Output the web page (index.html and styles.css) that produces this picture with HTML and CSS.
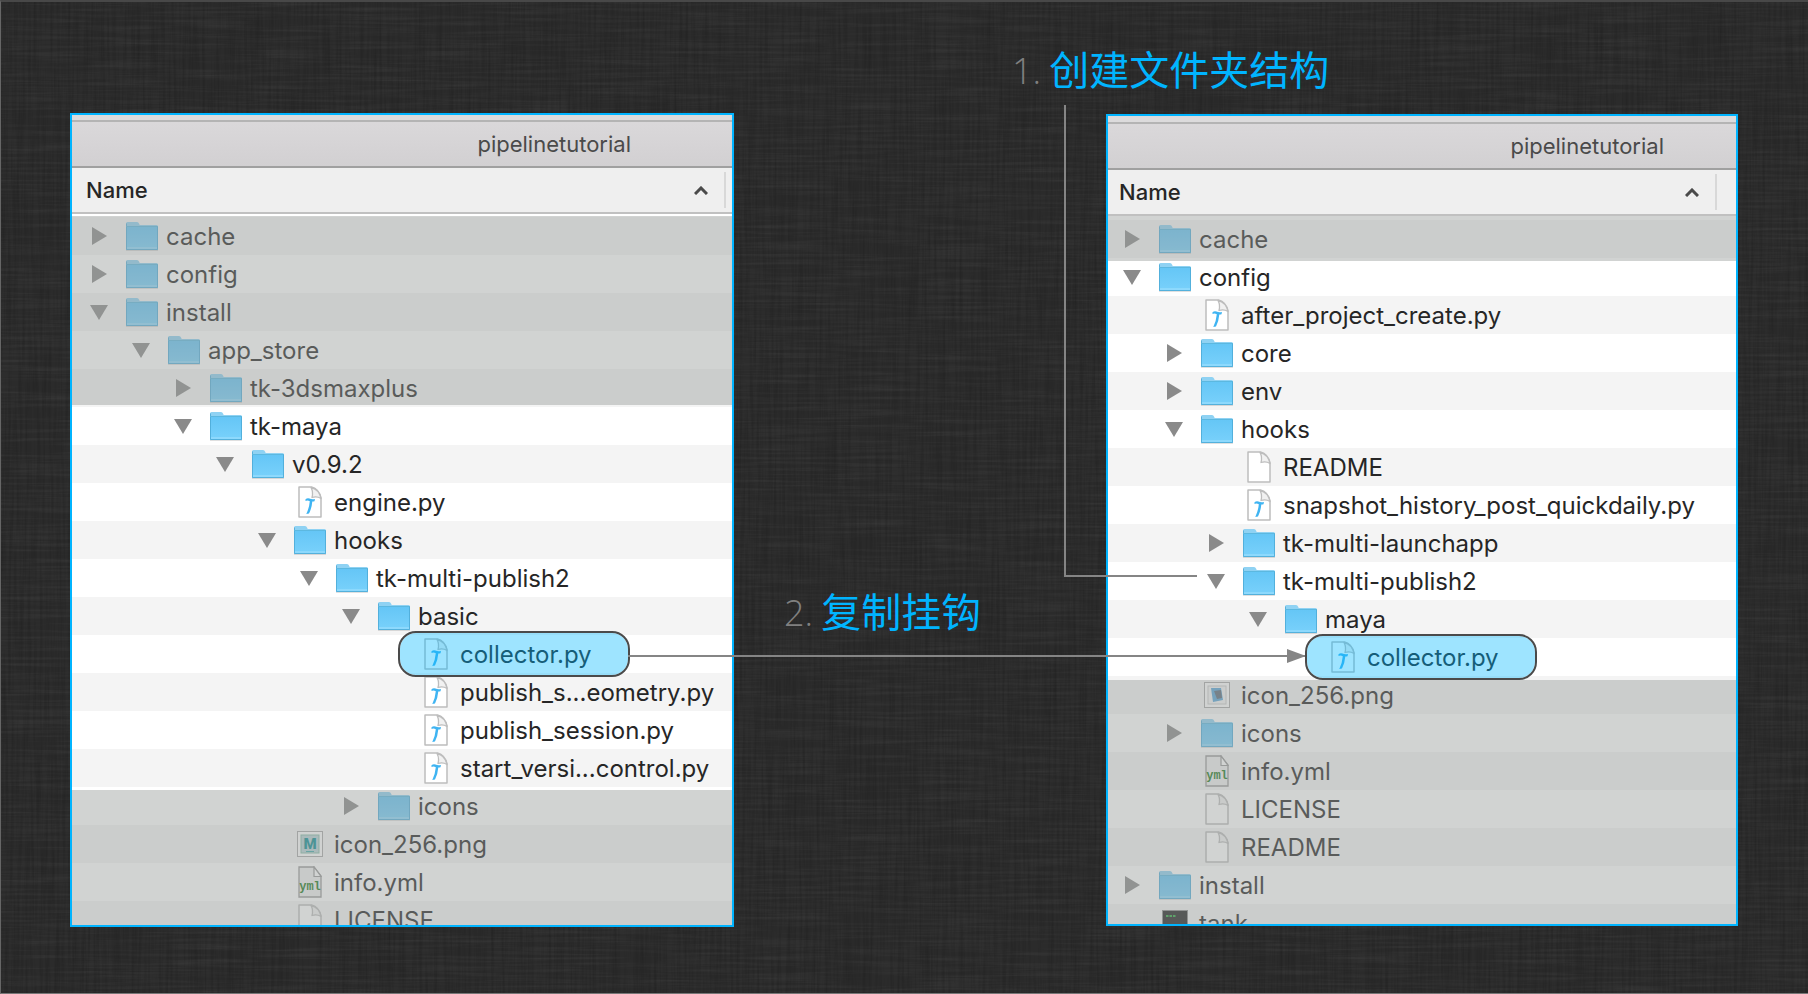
FILE: index.html
```html
<!DOCTYPE html>
<html lang="zh-CN">
<head>
<meta charset="utf-8">
<title>pipelinetutorial</title>
<meta name="viewport" content="width=device-width, initial-scale=1">
<link rel="stylesheet" href="styles.css">
</head>
<body>
<svg class="defs" aria-hidden="true">
  <defs>
    <linearGradient id="folder-fill" x1="0" y1="0" x2="0" y2="1">
      <stop offset="0" stop-color="#65c6f6"/><stop offset="1" stop-color="#79d1fb"/>
    </linearGradient>
    <symbol id="folder" viewBox="0 0 32 30">
      <path d="M0 29.500H32" stroke="#000" stroke-opacity=".12"/>
      <path d="M0 2.500Q0 1 1.500 1H11Q12.500 1 13 2.500L13.700 4H30.500Q32 4 32 5.500V28Q32 29 31 29H1Q0 29 0 28Z" fill="#8fd2f3"/>
      <path d="M0 6H32V28Q32 29 31 29H1Q0 29 0 28Z" fill="url(#folder-fill)"/>
      <path d="M.5 2.500V28.500H31.500V5" fill="none" stroke="#4ba9d4" stroke-opacity=".8"/>
      <path d="M0 5.500H32" stroke="#5cb8e0"/>
      <path d="M1 27H31" stroke="#a3e2ff"/>
    </symbol>
    <symbol id="sheet" viewBox="0 0 24 32">
      <path d="M1 1H13.500Q21 3 23 12V31H1Z" fill="#fff" stroke="#bdbdbd" stroke-width="1.500" stroke-linejoin="round"/>
      <path d="M13 1.500Q15.500 6 14 11.500Q19 10 23 12.500Q21 3 13 1.500Z" fill="#f1f1f1" stroke="#bdbdbd" stroke-width="1.300" stroke-linejoin="round"/>
    </symbol>
    <symbol id="python" viewBox="0 0 24 32">
      <use href="#sheet"/>
      <path d="M7.500 13.200Q9.500 11.800 11.500 12.600Q14 13.800 17 13L16.500 15.300Q14.800 15.800 14.300 15.500Q13.800 22 11 27.500L8.300 28Q11.300 21.500 11.800 15.200Q9.500 14 7.500 15Z" fill="#3fb4f2"/>
    </symbol>
    <symbol id="yaml" viewBox="0 0 24 32">
      <path d="M1 1H16L23 10V31H1Z" fill="#eee" stroke="#999" stroke-width="1.300"/>
      <path d="M16 1V10.500H23Z" fill="#fff" stroke="#999" stroke-width="1.200"/>
      <text x="12" y="24" text-anchor="middle" font-family="Liberation Mono, monospace" font-weight="700" font-size="12" fill="#1d7a1d">yml</text>
    </symbol>
    <symbol id="maya" viewBox="0 0 26 26">
      <rect x=".5" y=".5" width="25" height="25" fill="#fdfdfd" stroke="#aaa"/>
      <rect x="4" y="4" width="18" height="18" fill="#b9d2d6" stroke="#8ba"/>
      <text x="13" y="18" text-anchor="middle" font-family="Roboto, sans-serif" font-weight="900" font-size="15" fill="#0e8d92">M</text>
      <path d="M9 20.500H17" stroke="#42a9ab"/>
    </symbol>
    <symbol id="picture" viewBox="0 0 26 26">
      <rect x=".5" y=".5" width="25" height="25" fill="#fdfdfd" stroke="#aaa"/>
      <rect x="4" y="4" width="18" height="18" fill="#f4f4f4" stroke="#ccc"/>
      <path d="M7 6H17L19 18L9 20Z" fill="#5aa6d8"/>
      <path d="M10 9L17 8L18 16L13 17Z" fill="#5d6c7b"/>
    </symbol>
    <symbol id="terminal" viewBox="0 0 26 26">
      <rect x=".5" y=".5" width="25" height="25" fill="#222" stroke="#8a8a8a"/>
      <path d="M4 6H14" stroke="#36d24d" stroke-width="1.500" stroke-dasharray="2.500 1"/>
    </symbol>
    <symbol id="tri-right" viewBox="0 0 18 18"><path d="M2 0V18L17 9Z" fill="#8a8a8a"/></symbol>
    <symbol id="tri-down" viewBox="0 0 18 18"><path d="M0 2H18L9 17Z" fill="#8a8a8a"/></symbol>
    <filter id="weave-h" x="0" y="0" width="100%" height="100%">
      <feTurbulence type="fractalNoise" baseFrequency="0.012 0.35" numOctaves="3" seed="4"/>
      <feColorMatrix values="0 0 0 0 1  0 0 0 0 1  0 0 0 0 1  1.600 0 0 0 -0.620"/>
    </filter>
    <filter id="weave-v" x="0" y="0" width="100%" height="100%">
      <feTurbulence type="fractalNoise" baseFrequency="0.350 0.012" numOctaves="3" seed="9"/>
      <feColorMatrix values="0 0 0 0 0  0 0 0 0 0  0 0 0 0 0  1.600 0 0 0 -0.620"/>
    </filter>
  </defs>
</svg>

<main class="stage">
  <svg class="weave" aria-hidden="true">
    <rect class="weave-light" width="100%" height="100%" filter="url(#weave-h)"/>
    <rect class="weave-dark" width="100%" height="100%" filter="url(#weave-v)"/>
  </svg>

  <h2 class="step step-one"><span class="num">1.</span>创建文件夹结构</h2>

  <section class="window source" aria-label="pipelinetutorial">
    <div class="strip"></div>
    <header class="titlebar">pipelinetutorial</header>
    <div class="columns">
      <button class="sort" type="button">Name<svg class="chevron" viewBox="0 0 14 9" aria-hidden="true"><path d="M1 8L7 2L13 8"/></svg></button>
    </div>
    <ul class="tree">
      <li class="row l0"><button class="tri" type="button" aria-label="cache"><svg><use href="#tri-right"/></svg></button><svg class="icon folder"><use href="#folder"/></svg><span>cache</span></li>
      <li class="row l0"><button class="tri" type="button" aria-label="config"><svg><use href="#tri-right"/></svg></button><svg class="icon folder"><use href="#folder"/></svg><span>config</span></li>
      <li class="row l0"><button class="tri" type="button" aria-label="install"><svg><use href="#tri-down"/></svg></button><svg class="icon folder"><use href="#folder"/></svg><span>install</span></li>
      <li class="row l1"><button class="tri" type="button" aria-label="app_store"><svg><use href="#tri-down"/></svg></button><svg class="icon folder"><use href="#folder"/></svg><span>app_store</span></li>
      <li class="row l2"><button class="tri" type="button" aria-label="tk-3dsmaxplus"><svg><use href="#tri-right"/></svg></button><svg class="icon folder"><use href="#folder"/></svg><span>tk-3dsmaxplus</span></li>
      <li class="row l2"><button class="tri" type="button" aria-label="tk-maya"><svg><use href="#tri-down"/></svg></button><svg class="icon folder"><use href="#folder"/></svg><span>tk-maya</span></li>
      <li class="row l3"><button class="tri" type="button" aria-label="v0.9.2"><svg><use href="#tri-down"/></svg></button><svg class="icon folder"><use href="#folder"/></svg><span>v0.9.2</span></li>
      <li class="row l4 leaf"><svg class="icon"><use href="#python"/></svg><span>engine.py</span></li>
      <li class="row l4"><button class="tri" type="button" aria-label="hooks"><svg><use href="#tri-down"/></svg></button><svg class="icon folder"><use href="#folder"/></svg><span>hooks</span></li>
      <li class="row l5"><button class="tri" type="button" aria-label="tk-multi-publish2"><svg><use href="#tri-down"/></svg></button><svg class="icon folder"><use href="#folder"/></svg><span>tk-multi-publish2</span></li>
      <li class="row l6"><button class="tri" type="button" aria-label="basic"><svg><use href="#tri-down"/></svg></button><svg class="icon folder"><use href="#folder"/></svg><span>basic</span></li>
      <li class="row l7 leaf marked"><svg class="icon"><use href="#python"/></svg><span>collector.py</span></li>
      <li class="row l7 leaf"><svg class="icon"><use href="#python"/></svg><span>publish_s...eometry.py</span></li>
      <li class="row l7 leaf"><svg class="icon"><use href="#python"/></svg><span>publish_session.py</span></li>
      <li class="row l7 leaf"><svg class="icon"><use href="#python"/></svg><span>start_versi...control.py</span></li>
      <li class="row l6"><button class="tri" type="button" aria-label="icons"><svg><use href="#tri-right"/></svg></button><svg class="icon folder"><use href="#folder"/></svg><span>icons</span></li>
      <li class="row l4 leaf"><svg class="icon thumb"><use href="#maya"/></svg><span>icon_256.png</span></li>
      <li class="row l4 leaf"><svg class="icon"><use href="#yaml"/></svg><span>info.yml</span></li>
      <li class="row l4 leaf"><svg class="icon"><use href="#sheet"/></svg><span>LICENSE</span></li>
      <li class="shade shade-top" role="presentation"></li>
      <li class="shade shade-bottom" role="presentation"></li>
    </ul>
  </section>

  <div class="between">
    <h2 class="step step-two"><span class="num">2.</span>复制挂钩</h2>
    <div class="elbow"></div>
    <div class="arrow"><svg viewBox="0 0 19 14" aria-hidden="true"><path d="M0 0L19 7L0 14Z"/></svg></div>
  </div>

  <section class="window target" aria-label="pipelinetutorial">
    <div class="strip"></div>
    <header class="titlebar">pipelinetutorial</header>
    <div class="columns">
      <button class="sort" type="button">Name<svg class="chevron" viewBox="0 0 14 9" aria-hidden="true"><path d="M1 8L7 2L13 8"/></svg></button>
    </div>
    <ul class="tree">
      <li class="row l0"><button class="tri" type="button" aria-label="cache"><svg><use href="#tri-right"/></svg></button><svg class="icon folder"><use href="#folder"/></svg><span>cache</span></li>
      <li class="row l0"><button class="tri" type="button" aria-label="config"><svg><use href="#tri-down"/></svg></button><svg class="icon folder"><use href="#folder"/></svg><span>config</span></li>
      <li class="row l1 leaf"><svg class="icon"><use href="#python"/></svg><span>after_project_create.py</span></li>
      <li class="row l1"><button class="tri" type="button" aria-label="core"><svg><use href="#tri-right"/></svg></button><svg class="icon folder"><use href="#folder"/></svg><span>core</span></li>
      <li class="row l1"><button class="tri" type="button" aria-label="env"><svg><use href="#tri-right"/></svg></button><svg class="icon folder"><use href="#folder"/></svg><span>env</span></li>
      <li class="row l1"><button class="tri" type="button" aria-label="hooks"><svg><use href="#tri-down"/></svg></button><svg class="icon folder"><use href="#folder"/></svg><span>hooks</span></li>
      <li class="row l2 leaf"><svg class="icon"><use href="#sheet"/></svg><span>README</span></li>
      <li class="row l2 leaf"><svg class="icon"><use href="#python"/></svg><span>snapshot_history_post_quickdaily.py</span></li>
      <li class="row l2"><button class="tri" type="button" aria-label="tk-multi-launchapp"><svg><use href="#tri-right"/></svg></button><svg class="icon folder"><use href="#folder"/></svg><span>tk-multi-launchapp</span></li>
      <li class="row l2"><button class="tri" type="button" aria-label="tk-multi-publish2"><svg><use href="#tri-down"/></svg></button><svg class="icon folder"><use href="#folder"/></svg><span>tk-multi-publish2</span></li>
      <li class="row l3"><button class="tri" type="button" aria-label="maya"><svg><use href="#tri-down"/></svg></button><svg class="icon folder"><use href="#folder"/></svg><span>maya</span></li>
      <li class="row l4 leaf marked"><svg class="icon"><use href="#python"/></svg><span>collector.py</span></li>
      <li class="row l1 leaf"><svg class="icon thumb"><use href="#picture"/></svg><span>icon_256.png</span></li>
      <li class="row l1"><button class="tri" type="button" aria-label="icons"><svg><use href="#tri-right"/></svg></button><svg class="icon folder"><use href="#folder"/></svg><span>icons</span></li>
      <li class="row l1 leaf"><svg class="icon"><use href="#yaml"/></svg><span>info.yml</span></li>
      <li class="row l1 leaf"><svg class="icon"><use href="#sheet"/></svg><span>LICENSE</span></li>
      <li class="row l1 leaf"><svg class="icon"><use href="#sheet"/></svg><span>README</span></li>
      <li class="row l0"><button class="tri" type="button" aria-label="install"><svg><use href="#tri-right"/></svg></button><svg class="icon folder"><use href="#folder"/></svg><span>install</span></li>
      <li class="row l0 leaf"><svg class="icon thumb"><use href="#terminal"/></svg><span>tank</span></li>
      <li class="shade shade-top" role="presentation"></li>
      <li class="shade shade-bottom" role="presentation"></li>
    </ul>
  </section>
</main>
</body>
</html>
```

FILE: styles.css
```css
*, *::before, *::after { box-sizing: border-box; }

body {
  margin: 0;
  background: #2b2b2b;
  font-family: Inter, "Noto Sans CJK SC", sans-serif;
}

button {
  padding: 0;
  border: 0;
  background: none;
  color: inherit;
  font: inherit;
}

.defs { position: absolute; width: 0; height: 0; }

/* Stage: source window, gap with the arrow, target window */
.stage {
  position: relative;
  display: grid;
  grid-template-columns: 70fr 664fr 372fr 632fr 70fr;
  grid-template-rows: 113fr minmax(0, 814fr) 67fr;
  height: 100vh;
  overflow: hidden;
}
.stage::after {
  content: "";
  position: absolute;
  inset: 0;
  border: solid;
  border-width: 2px 0 1px 1px;
  border-color: #484848 transparent #777 #666;
  pointer-events: none;
}

.weave { position: absolute; inset: 0; width: 100%; height: 100%; }
.weave-light { opacity: .06; }
.weave-dark { opacity: .18; }

/* Step captions */
.step {
  display: flex;
  align-items: center;
  gap: 8px;
  margin: 0;
  color: #00b4ff;
  font-family: "Noto Sans CJK SC", sans-serif;
  font-size: 40px;
  font-weight: 400;
  line-height: 48px;
  white-space: nowrap;
}
.num {
  padding-top: 6px;
  color: #808080;
  font-family: "Open Sans", sans-serif;
  font-size: 36px;
  font-weight: 300;
  line-height: 42px;
}
.step-one {
  position: relative;
  grid-area: 1 / 4;
  align-self: start;
  margin: 44px 0 0 -94px;
}
.step-two { padding: 473px 0 0 50px; }

/* Finder windows */
.window {
  position: relative;
  display: flex;
  flex-direction: column;
  overflow: hidden;
  border: 2px solid #00b4ff;
  background: #fff;
  --inset: 18px;
}
.source { grid-area: 2 / 2; }
.target { grid-area: 2 / 4; margin: 1px 0; --inset: 15px; }

.strip {
  flex: none;
  height: 7px;
  border-bottom: 2px solid #b4b4b4;
  background: #dcdbdc;
}
.target .strip { height: 8px; }

.titlebar {
  flex: none;
  height: 46px;
  padding-right: 101px;
  border-bottom: 2px solid #a0a0a0;
  background: linear-gradient(#dad8da, #d2d0d2);
  color: #4a4a4a;
  font-size: 22px;
  line-height: 44px;
  text-align: right;
}
.target .titlebar { padding-right: 72px; }

.columns {
  flex: none;
  display: flex;
  height: 46px;
  padding: 4px 6px 4px 0;
  border-bottom: 2px solid #c0c0c0;
  background: #efefef;
}
.target .columns { padding-right: 19px; }
.sort {
  flex: 1;
  display: flex;
  align-items: center;
  justify-content: space-between;
  padding: 0 16px 0 calc(var(--inset) - 4px);
  border-right: 2px solid #d8d8d8;
  color: #262626;
  font-size: 22px;
  font-weight: 500;
}
.chevron { width: 14px; height: 9px; fill: none; stroke: #4a4a4a; stroke-width: 3; }

/* File tree */
.tree {
  position: relative;
  flex: 1;
  min-height: 0;
  margin: 0;
  padding: 3px 0 0;
  overflow: hidden;
  list-style: none;
}
.target .tree { padding-top: 4px; }

.row {
  position: relative;
  display: flex;
  align-items: center;
  height: 38px;
  padding-left: calc(var(--inset) + var(--level) * 42px);
  color: #262626;
  font-size: 24px;
  white-space: nowrap;
}
.row:nth-child(odd) { background: #f4f4f4; }
.l0 { --level: 0; }
.l1 { --level: 1; }
.l2 { --level: 2; }
.l3 { --level: 3; }
.l4 { --level: 4; }
.l5 { --level: 5; }
.l6 { --level: 6; }
.l7 { --level: 7; }

.tri { width: 18px; height: 18px; margin-right: 18px; }
.tri svg { display: block; width: 18px; height: 18px; }
.leaf::before { content: ""; width: 36px; }

.icon { width: 24px; height: 32px; margin: 0 12px 0 4px; }
.icon.folder { width: 32px; height: 30px; margin: 0 8px 0 0; }
.icon.thumb { width: 26px; height: 26px; margin: 0 11px 0 3px; }

.marked { z-index: 1; }
.marked::after {
  content: "";
  position: absolute;
  top: -4px;
  left: calc(var(--inset) + var(--level) * 42px + 14px);
  width: 232px;
  height: 46px;
  border: 2px solid #4a4a4a;
  border-radius: 18px;
  background: rgba(0, 183, 255, .38);
  background-clip: padding-box;
}

/* Grey veils over the rows that are not part of the steps */
.shade {
  position: absolute;
  left: 0;
  right: 0;
  background: rgba(153, 157, 155, .45);
}
.shade-top { top: 2px; height: 189px; }
.shade-bottom { top: 576px; bottom: 0; }
.target .shade-top { top: 0; height: 45px; }
.target .shade-bottom { top: 464px; }

/* Connectors */
.between { position: relative; grid-area: 2 / 3; z-index: 1; }
.elbow {
  position: absolute;
  top: -8px;
  right: -91px;
  width: 133px;
  height: 472px;
  border: solid #858585;
  border-width: 0 0 2px 2px;
}
.arrow {
  position: absolute;
  top: 542px;
  left: -106px;
  right: -200px;
  height: 2px;
  background: #858585;
}
.arrow svg {
  position: absolute;
  top: -6px;
  right: 0;
  width: 19px;
  height: 14px;
  fill: #858585;
}
```
